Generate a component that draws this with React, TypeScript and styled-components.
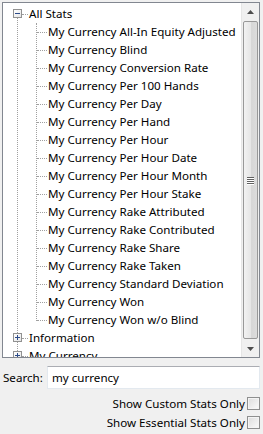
import { createGlobalStyle, styled } from "styled-components";

const Global = createGlobalStyle`
    html, body {
        margin: 0;
        padding: 0;
        background: #f0f0f0;
    }
    body {
        font-family: "Noto Sans", "Open Sans", sans-serif;
        font-size: 11.6px;
        color: #000;
    }
`;

const Page = styled.div`
    width: 263px;
    height: 434px;
    padding: 2px 3px 0 2px;
    box-sizing: border-box;
    display: flex;
    flex-direction: column;
`;

const TreeFrame = styled.div`
    height: 356px;
    border: 1px solid #828790;
    background: #fff;
    display: flex;
    box-sizing: border-box;
    overflow: hidden;
`;

const TreeBody = styled.div`
    flex: 1;
    position: relative;
    overflow: hidden;
    padding-top: 2px;
`;

const Row = styled.div<{ $level: number }>`
    height: 18px;
    display: flex;
    align-items: center;
    position: relative;
    padding-left: ${(p) => (p.$level === 0 ? 26 : 45)}px;
    white-space: nowrap;
    line-height: 18px;
`;

const Branch = styled.span<{ $level: number }>`
    position: absolute;
    top: 9px;
    left: ${(p) => (p.$level === 0 ? 19 : 34)}px;
    width: ${(p) => (p.$level === 0 ? 6 : 10)}px;
    border-top: 1px dotted #a0a0a0;
`;

const VLine = styled.span<{ $x: number; $top: number; $bottom: number }>`
    position: absolute;
    left: ${(p) => p.$x}px;
    top: ${(p) => p.$top}px;
    bottom: ${(p) => p.$bottom}px;
    border-left: 1px dotted #a0a0a0;
`;

const Toggle = styled.span`
    position: absolute;
    left: 10px;
    top: 4px;
    width: 9px;
    height: 9px;
    box-sizing: border-box;
    border: 1px solid #919191;
    background: linear-gradient(135deg, #fff, #e6e6e6);
    z-index: 1;

    &::before {
        content: "";
        position: absolute;
        left: 1px;
        right: 1px;
        top: 3px;
        height: 1px;
        background: #2d4c8a;
    }
`;

const Plus = styled(Toggle)`
    &::after {
        content: "";
        position: absolute;
        top: 1px;
        bottom: 1px;
        left: 3px;
        width: 1px;
        background: #2d4c8a;
    }
`;

const ScrollBar = styled.div`
    width: 17px;
    background: #f0f0f0;
    border-left: 1px solid #e6e6e6;
    display: flex;
    flex-direction: column;
    align-items: center;
`;

const Arrow = styled.div`
    height: 17px;
    width: 17px;
    display: flex;
    align-items: center;
    justify-content: center;
`;

const Thumb = styled.div`
    flex: 1;
    width: 15px;
    margin: 1px 0;
    box-sizing: border-box;
    border: 1px solid #989898;
    border-radius: 2px;
    background: linear-gradient(90deg, #f2f2f2 0%, #e6e6e6 50%, #d6d6d6 51%, #dcdcdc 100%);
    display: flex;
    align-items: center;
    justify-content: center;
`;

const Grip = styled.div`
    width: 7px;
    display: flex;
    flex-direction: column;
    gap: 1px;

    span {
        height: 1px;
        background: #606060;
        box-shadow: 0 1px 0 #fff;
    }
`;

const SearchRow = styled.div`
    display: flex;
    align-items: center;
    margin-top: 8px;
    padding-left: 1px;
`;

const Label = styled.span`
    width: 44px;
`;

const SearchInput = styled.div`
    flex: 1;
    height: 23px;
    box-sizing: border-box;
    border: 1px solid #e3e9ef;
    border-top-color: #abadb3;
    background: #fff;
    padding-left: 4px;
    display: flex;
    align-items: center;
`;

const Options = styled.div`
    display: flex;
    flex-direction: column;
    align-items: flex-end;
    margin-top: 8px;
    gap: 6px;
`;

const Option = styled.label`
    display: flex;
    align-items: center;
    gap: 2px;
    height: 13px;
`;

const Box = styled.span`
    width: 13px;
    height: 13px;
    box-sizing: border-box;
    border: 1px solid #8e8f8f;
    background: linear-gradient(135deg, #dcdcdc, #fbfbfb);
    box-shadow: inset 0 0 0 1px #f4f4f4;
`;

const stats = [
    "All-In Equity Adjusted",
    "Blind",
    "Conversion Rate",
    "Per 100 Hands",
    "Per Day",
    "Per Hand",
    "Per Hour",
    "Per Hour Date",
    "Per Hour Month",
    "Per Hour Stake",
    "Rake Attributed",
    "Rake Contributed",
    "Rake Share",
    "Rake Taken",
    "Standard Deviation",
    "Won",
    "Won w/o Blind",
];

export default function App() {
    return (
        <>
            <Global />
            <Page>
                <TreeFrame>
                    <TreeBody>
                        <VLine $x={14} $top={11} $bottom={0} />
                        <VLine $x={33} $top={20} $bottom={36} />
                        <Row $level={0}>
                            <Toggle />
                            <Branch $level={0} />
                            All Stats
                        </Row>
                        {stats.map((s) => (
                            <Row $level={1} key={s}>
                                <Branch $level={1} />
                                My Currency {s}
                            </Row>
                        ))}
                        <Row $level={0}>
                            <Plus />
                            <Branch $level={0} />
                            Information
                        </Row>
                        <Row $level={0}>
                            <Plus />
                            <Branch $level={0} />
                            My Currency
                        </Row>
                    </TreeBody>
                    <ScrollBar>
                        <Arrow>
                            <svg width="7" height="4" viewBox="0 0 7 4">
                                <path d="M0 4 L3.5 0 L7 4 Z" fill="#4d4d4d" />
                            </svg>
                        </Arrow>
                        <Thumb>
                            <Grip>
                                <span />
                                <span />
                                <span />
                                <span />
                            </Grip>
                        </Thumb>
                        <Arrow>
                            <svg width="7" height="4" viewBox="0 0 7 4">
                                <path d="M0 0 L7 0 L3.5 4 Z" fill="#4d4d4d" />
                            </svg>
                        </Arrow>
                    </ScrollBar>
                </TreeFrame>
                <SearchRow>
                    <Label>Search:</Label>
                    <SearchInput>my currency</SearchInput>
                </SearchRow>
                <Options>
                    <Option>
                        Show Custom Stats Only
                        <Box />
                    </Option>
                    <Option>
                        Show Essential Stats Only
                        <Box />
                    </Option>
                </Options>
            </Page>
        </>
    );
}
